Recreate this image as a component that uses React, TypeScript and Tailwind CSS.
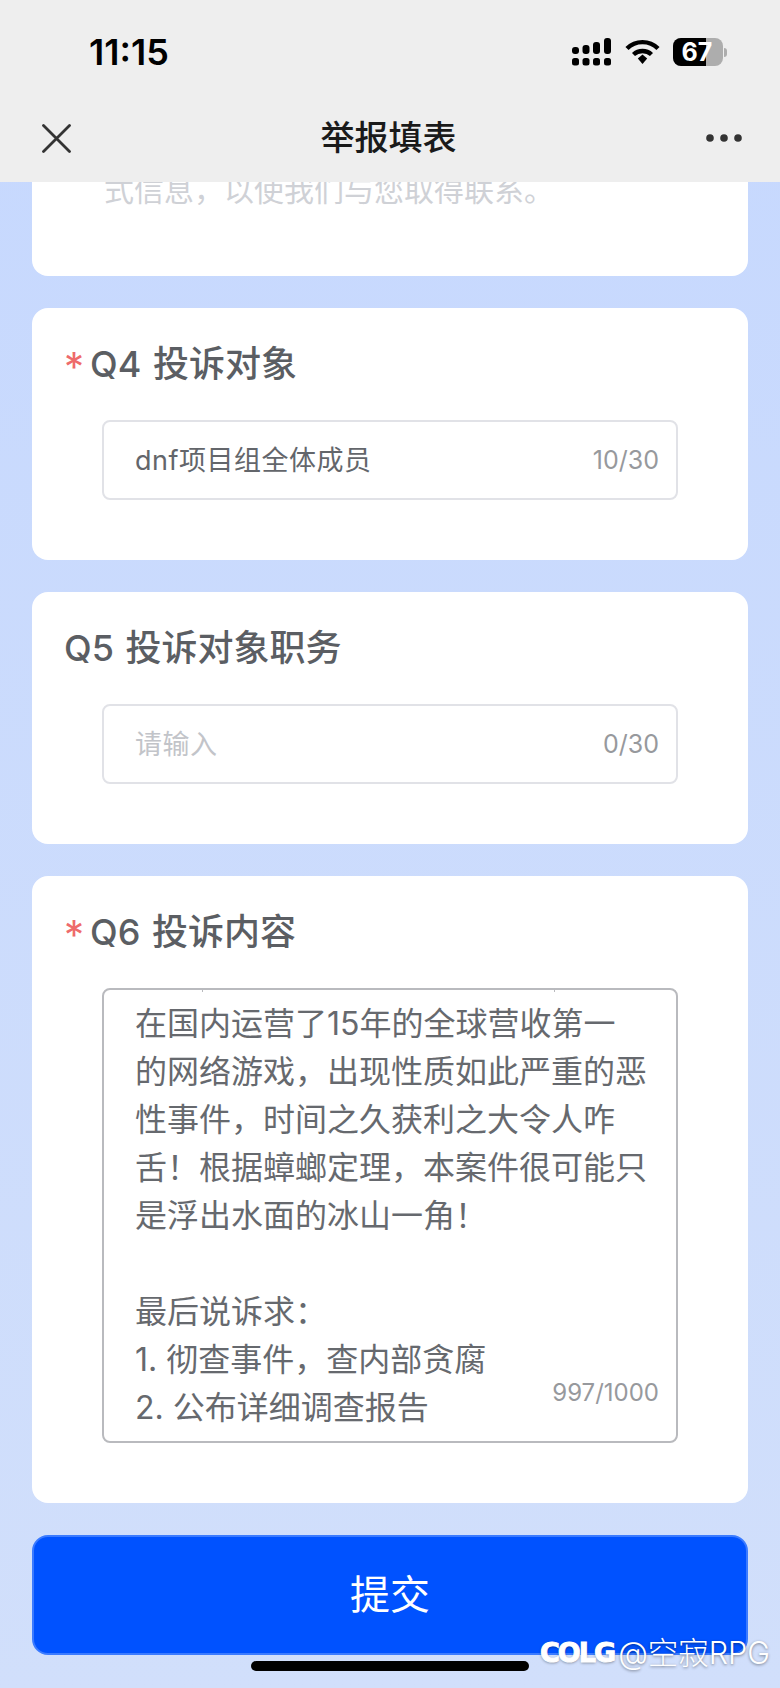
const cjk = "font-['Inter','Noto_Sans_CJK_SC',sans-serif]";

function SignalIcon() {
  return (
    <svg width="40" height="28" viewBox="0 0 40 28" fill="#000">
      <rect x="0" y="9" width="7" height="7" rx="3" />
      <rect x="10.5" y="7" width="7" height="9" rx="3" />
      <rect x="21" y="4" width="7" height="12" rx="3" />
      <rect x="32" y="0" width="7" height="16" rx="3" />
      <rect x="0" y="20" width="7" height="7.5" rx="2.5" />
      <rect x="10.5" y="20" width="7" height="7.5" rx="2.5" />
      <rect x="21" y="20" width="7" height="7.5" rx="2.5" />
      <rect x="32" y="20" width="7" height="7.5" rx="2.5" />
    </svg>
  );
}

function WifiIcon() {
  return (
    <svg width="35" height="26" viewBox="0 0 35 26" fill="none" stroke="#000" strokeWidth="4.4">
      <path d="M2 9.5 C10.5 1 24.5 1 33 9.5" />
      <path d="M8.5 15.5 C13.5 10.8 21.5 10.8 26.5 15.5" />
      <path d="M12.8 19.6 L17.5 15.6 L22.2 19.6 L17.5 25 Z" fill="#000" stroke="none" />
    </svg>
  );
}

function Battery() {
  return (
    <div className="flex items-center gap-[1px]">
      <div className="relative w-[50px] h-[28px] rounded-[8px] bg-[#adadad]">
        <div className="absolute inset-y-0 left-0 w-[33px] rounded-l-[8px] bg-black" />
        <span className="absolute inset-0 flex items-center justify-center font-['Inter',sans-serif] text-[25px] font-bold leading-none text-white pr-[2px]">
          67
        </span>
      </div>
      <div className="w-[3px] h-[9px] rounded-r-full bg-[#adadad]" />
    </div>
  );
}

function Header() {
  return (
    <header className="relative z-10 shrink-0 h-[182px] bg-[#eeeeee]">
      <div className="h-[104px] flex items-center justify-between pl-[89px] pr-[53px]">
        <span className="font-['Inter',sans-serif] text-[36px] font-semibold leading-none text-black">
          11:15
        </span>
        <div className="flex items-center gap-[13px]">
          <SignalIcon />
          <WifiIcon />
          <Battery />
        </div>
      </div>
      <div className="h-[68px] flex items-center justify-between pl-[42px] pr-[38px]">
        <svg width="29" height="29" viewBox="0 0 29 29" stroke="#333" strokeWidth="2.8" strokeLinecap="round">
          <path d="M1.5 1.5 L27.5 27.5 M27.5 1.5 L1.5 27.5" />
        </svg>
        <span className={`${cjk} text-[34px] font-medium leading-none text-[#1a1a1a]`}>举报填表</span>
        <svg width="36" height="8" viewBox="0 0 36 8" fill="#333">
          <circle cx="4" cy="4" r="3.8" />
          <circle cx="18" cy="4" r="3.8" />
          <circle cx="32" cy="4" r="3.8" />
        </svg>
      </div>
    </header>
  );
}

function QuestionTitle({ label, required }: { label: string; required?: boolean }) {
  return (
    <h2 className={`${cjk} flex h-[48px] items-center text-[36px] font-medium leading-[48px] whitespace-pre [word-spacing:2px] text-[#5b5e63]`}>
      {required && <span className="w-[26px] text-[#ee6b6b] font-normal text-[40px] leading-[48px] pt-[6px]">*</span>}
      {label}
    </h2>
  );
}

function TextField({ value, placeholder, count }: { value?: string; placeholder?: string; count: string }) {
  return (
    <div className="mt-[32px] mx-[38px] h-[80px] pl-[31px] pr-[17px] flex items-center justify-between rounded-[8px] border-2 border-[#e1e2e7] bg-white">
      <span className={`${cjk} text-[27px] leading-none tracking-[0.5px] ${value ? "text-[#63666b]" : "text-[#c2c4c9]"}`}>
        {value ?? placeholder}
      </span>
      <span className={`${cjk} text-[25px] leading-none text-[#97999d]`}>{count}</span>
    </div>
  );
}

const complaintLines = [
  "在国内运营了15年的全球营收第一",
  "的网络游戏\uFF0C出现性质如此严重的恶",
  "性事件\uFF0C时间之久获利之大令人咋",
  "舌\uFF01根据蟑螂定理\uFF0C本案件很可能只",
  "是浮出水面的冰山一角\uFF01",
  "\u00a0",
  "最后说诉求\uFF1A",
  "1. 彻查事件\uFF0C查内部贪腐",
  "2. 公布详细调查报告",
];

export default function App() {
  return (
    <div className="relative w-[780px] h-[1688px] overflow-hidden flex flex-col bg-gradient-to-b from-[#c6d8fe] to-[#d1dffb]">
      <Header />
      <main className="flex flex-col gap-[32px] px-[32px]">
        <section className="h-[94px] rounded-b-[16px] bg-white pl-[72px]">
          <p className={`${cjk} -mt-[12px] text-[30px] leading-[40px] text-[#cfd1d6] whitespace-nowrap`}>
            {"式信息\uFF0C以使我们与您取得联系\u3002"}
          </p>
        </section>

        <section className="h-[252px] rounded-[16px] bg-white pt-[32px] px-[32px]">
          <QuestionTitle label="Q4 投诉对象" required />
          <TextField value="dnf项目组全体成员" count="10/30" />
        </section>

        <section className="h-[252px] rounded-[16px] bg-white pt-[32px] px-[32px]">
          <QuestionTitle label="Q5 投诉对象职务" />
          <TextField placeholder="请输入" count="0/30" />
        </section>

        <section className="h-[627px] rounded-[16px] bg-white pt-[32px] px-[32px]">
          <QuestionTitle label="Q6 投诉内容" required />
          <div className="relative mt-[32px] mx-[38px] h-[455px] rounded-[8px] border-2 border-[#b9babe] pt-[10px] pl-[31px] overflow-hidden">
            {/* tiny ticks left by the scrolled text under the top edge */}
            <span className="absolute left-[98px] top-0 w-[1px] h-[2px] bg-[#b9babe]" />
            <span className="absolute left-[450px] top-0 w-[1px] h-[2px] bg-[#b9babe]" />
            {complaintLines.map((line, i) => (
              <p key={i} className={`${cjk} text-[32px] leading-[48px] text-[#66696e] whitespace-nowrap`}>
                {line}
              </p>
            ))}
            <span className={`${cjk} absolute right-[17px] bottom-[36px] text-[24px] leading-none text-[#97999d]`}>
              997/1000
            </span>
          </div>
        </section>

        <button className={`${cjk} h-[120px] rounded-[16px] border-2 border-[#3b7bff] bg-[#0052ff] text-[40px] text-white`}>
          提交
        </button>
      </main>
      <div className="mt-[6px] mx-auto w-[278px] h-[10px] rounded-full bg-black" />

      {/* watermark sits over the button */}
      <div className="absolute left-[540px] top-[1636px] flex items-center gap-[4px] text-white [text-shadow:0_1px_3px_rgba(0,0,0,0.45)]">
        <span className="font-['DejaVu_Sans',sans-serif] text-[27px] font-bold leading-[34px] tracking-[-2px] [-webkit-text-stroke:1px_white]">COLG</span>
        <span className={`${cjk} text-[30.5px] leading-[34px] font-light`}>@空寂RPG</span>
      </div>
    </div>
  );
}
